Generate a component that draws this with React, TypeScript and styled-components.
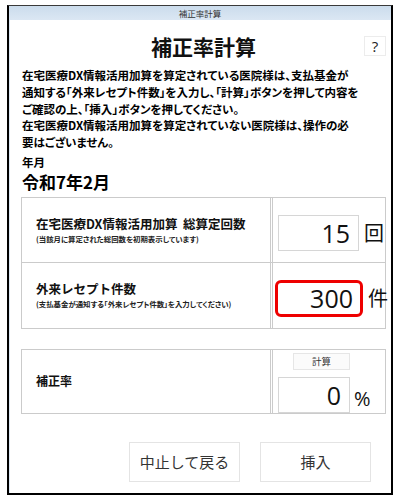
import styled, { createGlobalStyle } from "styled-components";

const GlobalStyle = createGlobalStyle`
    html, body {
        margin: 0;
        padding: 0;
        background: #ffffff;
    }
    body {
        font-family: "Noto Sans CJK JP", "Noto Sans", sans-serif;
        color: #000;
    }
`;

const jp = `"Noto Sans CJK JP", "Noto Sans", sans-serif`;
const num = `"Open Sans", "Noto Sans CJK JP", sans-serif`;

const PageEl = styled.div`
    padding: 5px 9px 0 7px;
    width: 402px;
    height: 503px;
    box-sizing: border-box;
`;

const WindowEl = styled.div`
    width: 386px;
    height: 490px;
    box-sizing: border-box;
    border: 2px solid #000;
    border-top: 1px solid #3a3a3a;
    display: flex;
    flex-direction: column;
    background: #fff;
    overflow: hidden;
`;

const TitleBarEl = styled.div`
    height: 14px;
    flex: none;
    background: linear-gradient(#cbdcec, #dbe7f3);
    font-family: ${jp};
    font-size: 8.5px;
    line-height: 14px;
    color: #333;
    text-align: center;
`;

const BodyEl = styled.div`
    flex: 1;
    padding: 0 5px 0 11px;
    border-left: 1px solid #dde8f3;
    display: flex;
    flex-direction: column;
`;

const HeaderEl = styled.div`
    display: grid;
    grid-template-columns: 1fr auto 1fr;
    align-items: center;
    padding-top: 12px;
    height: 28px;
`;

const TitleEl = styled.h1`
    grid-column: 2;
    margin: 0;
    font-family: ${jp};
    font-size: 21px;
    line-height: 28px;
    font-weight: 700;
    color: #111;
`;

const HelpButtonEl = styled.button`
    grid-column: 3;
    justify-self: end;
    width: 22px;
    height: 20px;
    padding: 0;
    border: 1px solid #ececec;
    background: #fff;
    font-family: ${num};
    font-size: 15px;
    line-height: 17px;
    color: #222;
`;

const DescEl = styled.p`
    margin: 7px 0 0 1px;
    font-family: ${jp};
    font-size: 11.5px;
    line-height: 16.8px;
    font-weight: 700;
    white-space: pre;
    font-feature-settings: "palt";
`;

const SmallLabelEl = styled.div`
    margin: 3px 0 0 1px;
    font-family: ${jp};
    font-size: 11.5px;
    line-height: 16px;
    font-weight: 700;
`;

const MonthEl = styled.div`
    margin: 0 0 0 1px;
    font-family: ${jp};
    font-size: 17px;
    line-height: 24px;
    font-weight: 700;
`;

const TableEl = styled.div<{ $top: number }>`
    margin-top: ${(p) => p.$top}px;
    border: 1px solid #cbcbcb;
    display: flex;
    flex-direction: column;
`;

const RowEl = styled.div<{ $h: number }>`
    display: grid;
    grid-template-columns: 248px 1fr;
    height: ${(p) => p.$h}px;
    & + & {
        border-top: 1px solid #cbcbcb;
    }
`;

const LabelCellEl = styled.div`
    padding-left: 14px;
    display: flex;
    flex-direction: column;
    justify-content: center;
`;

const LabelMainEl = styled.div<{ $size: number }>`
    font-family: ${jp};
    font-size: ${(p) => p.$size}px;
    line-height: 18px;
    font-weight: 700;
    color: #111;
`;

const LabelSubEl = styled.div`
    font-family: ${jp};
    font-size: 7.4px;
    line-height: 12px;
    font-weight: 700;
    color: #222;
    font-feature-settings: "palt";
`;

const ValueCellEl = styled.div<{ $column?: boolean }>`
    border-left: 3px double #cbcbcb;
    display: flex;
    flex-direction: ${(p) => (p.$column ? "column" : "row")};
    align-items: ${(p) => (p.$column ? "flex-start" : "center")};
    padding: ${(p) => (p.$column ? "3px 0 0 5px" : "6px 0 0 5px")};
    gap: 5px;
`;

const NumBoxEl = styled.div<{ $w: number; $alert?: boolean }>`
    width: ${(p) => p.$w}px;
    height: ${(p) => (p.$alert ? 37 : 36)}px;
    box-sizing: border-box;
    border: ${(p) => (p.$alert ? "3px solid #ee0000" : "1px solid #d6d6d6")};
    border-radius: ${(p) => (p.$alert ? "6px" : "0")};
    margin-left: ${(p) => (p.$alert ? "-3px" : "0")};
    padding-right: ${(p) => (p.$alert ? "7px" : "8px")};
    background: #fff;
    font-family: ${num};
    font-size: 25px;
    line-height: ${(p) => (p.$alert ? 31 : 34)}px;
    text-align: right;
    color: #111;
`;

const UnitEl = styled.span`
    font-family: ${jp};
    font-size: 20px;
    line-height: 24px;
    color: #111;
`;

const CalcButtonEl = styled.button`
    margin-left: 15px;
    width: 57px;
    height: 17px;
    padding: 0;
    border: 1px solid #e6e6e6;
    background: #fbfbfb;
    font-family: ${jp};
    font-size: 9.5px;
    line-height: 15px;
    color: #333;
`;

const RateLineEl = styled.div`
    display: flex;
    align-items: center;
    gap: 4px;
    margin-top: 2px;
`;

const PercentEl = styled.span`
    font-family: ${num};
    font-size: 20px;
    line-height: 24px;
    margin-top: 8px;
    color: #111;
`;

const FooterEl = styled.div`
    display: flex;
    justify-content: flex-end;
    gap: 20px;
    padding-right: 15px;
    margin-top: 28px;
`;

const ActionButtonEl = styled.button`
    width: 111px;
    height: 40px;
    padding: 0;
    border: 1px solid #e4e4e4;
    background: #fff;
    font-family: ${jp};
    font-size: 15px;
    color: #333;
`;

const desc = `在宅医療DX情報活用加算を算定されている医院様は、支払基金が
通知する「外来レセプト件数」を入力し、「計算」ボタンを押して内容を
ご確認の上、「挿入」ボタンを押してください。
在宅医療DX情報活用加算を算定されていない医院様は、操作の必
要はございません。`;

export default function App() {
    return (
        <PageEl>
            <GlobalStyle />
            <WindowEl>
                <TitleBarEl>補正率計算</TitleBarEl>
                <BodyEl>
                    <HeaderEl>
                        <TitleEl>補正率計算</TitleEl>
                        <HelpButtonEl>?</HelpButtonEl>
                    </HeaderEl>
                    <DescEl>{desc}</DescEl>
                    <SmallLabelEl>年月</SmallLabelEl>
                    <MonthEl>令和7年2月</MonthEl>

                    <TableEl $top={3}>
                        <RowEl $h={64}>
                            <LabelCellEl>
                                <LabelMainEl $size={12.5}>
                                    在宅医療DX情報活用加算&nbsp;&nbsp;総算定回数
                                </LabelMainEl>
                                <LabelSubEl>(当該月に算定された総回数を初期表示しています)</LabelSubEl>
                            </LabelCellEl>
                            <ValueCellEl>
                                <NumBoxEl $w={81}>15</NumBoxEl>
                                <UnitEl>回</UnitEl>
                            </ValueCellEl>
                        </RowEl>
                        <RowEl $h={65}>
                            <LabelCellEl>
                                <LabelMainEl $size={12.5}>外来レセプト件数</LabelMainEl>
                                <LabelSubEl>(支払基金が通知する「外来レセプト件数」を入力してください)</LabelSubEl>
                            </LabelCellEl>
                            <ValueCellEl>
                                <NumBoxEl $w={88} $alert>300</NumBoxEl>
                                <UnitEl>件</UnitEl>
                            </ValueCellEl>
                        </RowEl>
                    </TableEl>

                    <TableEl $top={20}>
                        <RowEl $h={63}>
                            <LabelCellEl>
                                <LabelMainEl $size={12}>補正率</LabelMainEl>
                            </LabelCellEl>
                            <ValueCellEl $column>
                                <CalcButtonEl>計算</CalcButtonEl>
                                <RateLineEl>
                                    <NumBoxEl $w={72}>0</NumBoxEl>
                                    <PercentEl>%</PercentEl>
                                </RateLineEl>
                            </ValueCellEl>
                        </RowEl>
                    </TableEl>

                    <FooterEl>
                        <ActionButtonEl>中止して戻る</ActionButtonEl>
                        <ActionButtonEl>挿入</ActionButtonEl>
                    </FooterEl>
                </BodyEl>
            </WindowEl>
        </PageEl>
    );
}
